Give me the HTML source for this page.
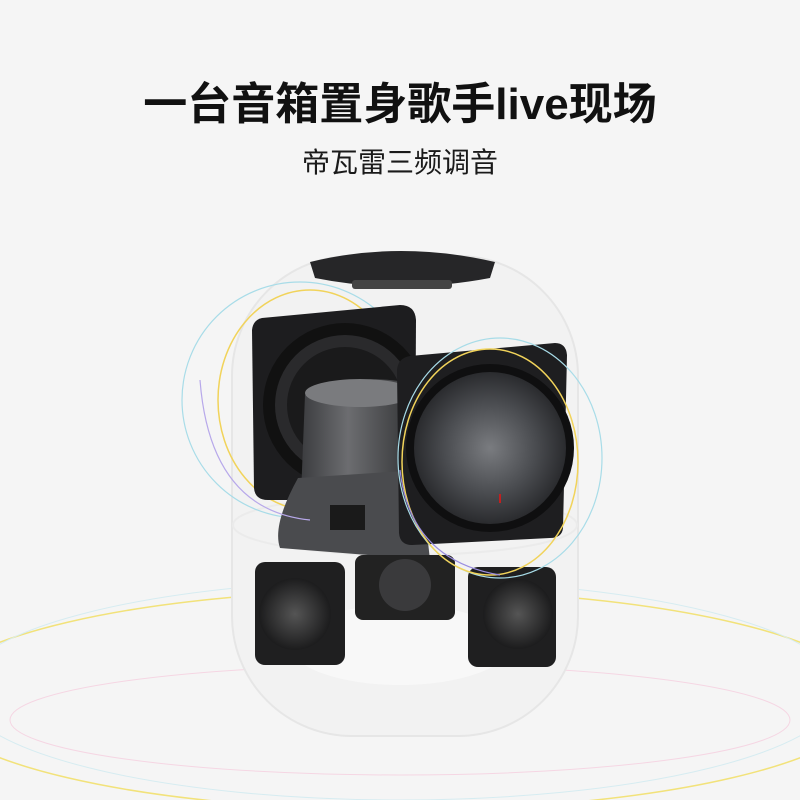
<!DOCTYPE html>
<html><head><meta charset="utf-8"><style>
html,body{margin:0;padding:0;background:#f5f5f5;}
body{width:800px;height:800px;overflow:hidden;position:relative;font-family:"Liberation Sans","Noto Sans CJK SC",sans-serif;}
.t{position:absolute;left:0;width:800px;text-align:center;color:#111;}
#h1{top:78px;font-size:44px;font-weight:bold;line-height:54px;}
#h2{top:145px;font-size:28px;line-height:36px;color:#1a1a1a;}
svg{position:absolute;left:0;top:0;}
</style></head><body>
<svg width="800" height="800" viewBox="0 0 800 800">
<defs>
<radialGradient id="met" cx="50%" cy="50%" r="50%">
<stop offset="0" stop-color="#7a7c80"/><stop offset="0.6" stop-color="#4a4c50"/><stop offset="1" stop-color="#2a2b2e"/></radialGradient>
<linearGradient id="cyl" x1="0" x2="1"><stop offset="0" stop-color="#3a3b3e"/><stop offset="0.4" stop-color="#6c6d70"/><stop offset="1" stop-color="#2e2f31"/></linearGradient>
<radialGradient id="sm" cx="50%" cy="50%" r="50%"><stop offset="0" stop-color="#555"/><stop offset="1" stop-color="#1c1c1d"/></radialGradient>
</defs>
<!-- floor rings -->
<ellipse cx="400" cy="700" rx="470" ry="110" fill="none" stroke="#f2e27a" stroke-width="1.5"/>
<ellipse cx="400" cy="690" rx="440" ry="110" fill="none" stroke="#d6ecf1" stroke-width="1"/>
<ellipse cx="400" cy="720" rx="390" ry="55" fill="none" stroke="#f5d6e3" stroke-width="1"/>
<!-- glass body -->
<rect x="232" y="256" width="346" height="480" rx="120" fill="#f2f2f2" stroke="#e6e6e6" stroke-width="2"/>
<ellipse cx="405" cy="525" rx="172" ry="30" fill="none" stroke="#ebebeb" stroke-width="2"/>
<ellipse cx="400" cy="645" rx="110" ry="40" fill="#f8f8f8"/>
<!-- top disc -->
<path d="M310 262 Q400 240 495 262 L490 278 Q400 295 315 278 Z" fill="#262628"/>
<rect x="352" y="280" width="100" height="9" rx="3" fill="#444"/>
<!-- left rings -->
<circle cx="300" cy="400" r="118" fill="none" stroke="#a8dce8" stroke-width="1.2"/>
<ellipse cx="310" cy="400" rx="92" ry="110" fill="none" stroke="#f1d35a" stroke-width="1.5"/>
<!-- left woofer -->
<path d="M262 318 L400 305 Q415 305 416 320 L415 490 Q413 500 400 500 L268 500 Q255 500 254 488 L252 330 Q253 320 262 318Z" fill="#1d1d1f"/>
<circle cx="345" cy="405" r="82" fill="#111"/>
<circle cx="345" cy="405" r="70" fill="#2a2a2c"/>
<circle cx="345" cy="405" r="58" fill="#1a1a1b"/>
<!-- motor -->
<path d="M305 395 Q360 370 420 385 L420 520 L300 520 Z" fill="url(#cyl)"/>
<ellipse cx="360" cy="393" rx="55" ry="14" fill="#7a7b7e"/>
<path d="M298 478 L420 470 L430 560 L280 548 Q272 525 298 478Z" fill="#4a4b4e"/>
<rect x="330" y="505" width="35" height="25" fill="#1a1a1a"/>
<!-- bottom speakers -->
<rect x="355" y="555" width="100" height="65" rx="8" fill="#222"/>
<circle cx="405" cy="585" r="26" fill="#3a3a3c"/>
<rect x="255" y="562" width="90" height="103" rx="10" fill="#1f1f20"/>
<circle cx="295" cy="614" r="36" fill="url(#sm)"/>
<rect x="468" y="567" width="88" height="100" rx="10" fill="#1f1f20"/>
<circle cx="518" cy="614" r="35" fill="url(#sm)"/>
<!-- right woofer -->
<path d="M410 356 L555 343 Q566 343 567 355 L563 528 Q562 538 550 538 L412 545 Q400 545 399 533 L397 370 Q398 358 410 356Z" fill="#1e1e20"/>
<circle cx="490" cy="448" r="84" fill="#0f0f10"/>
<circle cx="490" cy="448" r="76" fill="url(#met)"/>
<rect x="499" y="494" width="2" height="9" fill="#c02020"/>
<!-- right rings -->
<ellipse cx="500" cy="458" rx="102" ry="120" fill="none" stroke="#a8dce8" stroke-width="1.2"/>
<ellipse cx="490" cy="462" rx="88" ry="113" fill="none" stroke="#f1d35a" stroke-width="1.5"/>
<path d="M400 470 Q410 560 500 575" fill="none" stroke="#9a8de0" stroke-width="1.2"/>
<path d="M200 380 Q210 510 310 520" fill="none" stroke="#b7a8ea" stroke-width="1.2"/>
</svg>
<div class="t" id="h1">一台音箱置身歌手live现场</div>
<div class="t" id="h2">帝瓦雷三频调音</div>
</body></html>
